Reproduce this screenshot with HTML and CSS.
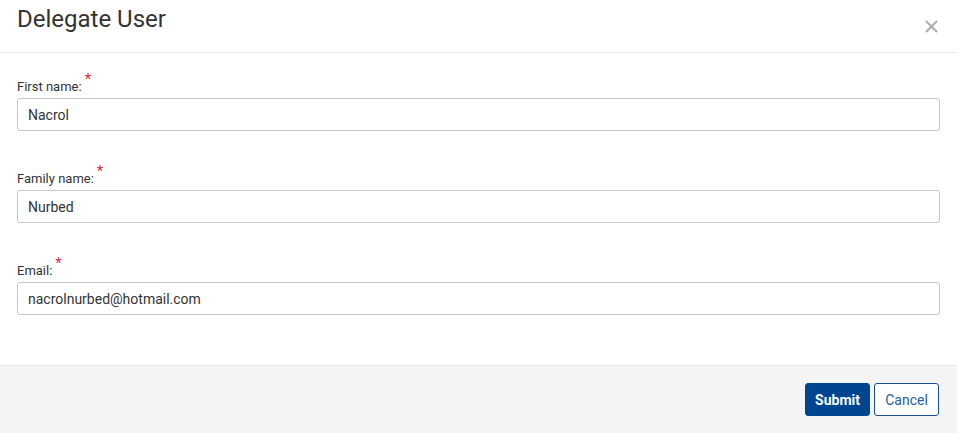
FILE: index.html
```html
<!DOCTYPE html>
<html>
    <head>
        <meta charset="utf-8">
        <title>Delegate User</title>
        <link rel="stylesheet" href="styles.css">
    </head>
    <body>
        <div class="modal">
            <div class="modal-header">
                <h1 class="modal-title">Delegate User</h1>
                <button class="close" type="button">
                    <svg width="13" height="13" viewBox="0 0 13 13">
                        <path d="M1 1L12 12M12 1L1 12" stroke="#acacac" stroke-width="2" fill="none"/>
                    </svg>
                </button>
            </div>
            <div class="modal-body">
                <div class="field">
                    <label for="firstname">First name:<span class="req">*</span></label>
                    <input type="text" id="firstname" value="Nacrol">
                </div>
                <div class="field">
                    <label for="familyname">Family name:<span class="req">*</span></label>
                    <input type="text" id="familyname" value="Nurbed">
                </div>
                <div class="field">
                    <label for="email">Email:<span class="req">*</span></label>
                    <input type="text" id="email" value="nacrolnurbed@hotmail.com">
                </div>
            </div>
            <div class="modal-footer">
                <button class="btn btn-primary" type="button">Submit</button>
                <button class="btn btn-default" type="button">Cancel</button>
            </div>
        </div>
    </body>
</html>
```

FILE: styles.css
```css
body{
    margin: 0;
    font-family: Roboto, "Liberation Sans", sans-serif;
    color: #333;
    background: #fff;
}
.modal{
    width: 957px;
    height: 433px;
    display: flex;
    flex-direction: column;
}
.modal-header{
    box-sizing: border-box;
    height: 53px;
    padding: 5px 19px 0 17px;
    border-bottom: 1px solid #e9e9e9;
    display: flex;
    justify-content: space-between;
    align-items: flex-start;
}
.modal-title{
    margin: 0;
    font-size: 24px;
    line-height: 28px;
    font-weight: 400;
    color: #333;
}
.close{
    margin-top: 15px;
    padding: 0;
    border: 0;
    background: none;
    width: 13px;
    height: 13px;
    cursor: pointer;
}
.close svg{
    display: block;
}
.modal-body{
    padding: 25px 17px 11px 17px;
}
.field{
    margin-bottom: 39px;
}
.field label{
    display: block;
    font-size: 13px;
    line-height: 17px;
    height: 17px;
    margin-bottom: 3px;
    color: #333;
}
.req{
    color: #e2293f;
    font-size: 15px;
    line-height: 14px;
    vertical-align: top;
    position: relative;
    top: -6px;
    margin-left: 3px;
}
.field input{
    box-sizing: border-box;
    display: block;
    width: 100%;
    height: 33px;
    padding: 0 10px;
    border: 1px solid #c6c6c6;
    border-radius: 3px;
    font-family: Roboto, "Liberation Sans", sans-serif;
    font-size: 14px;
    color: #333;
    outline: none;
}
.modal-footer{
    flex: 1;
    background: #f4f4f4;
    border-top: 1px solid #e6e6e6;
    padding: 17px 18px 0 0;
    display: flex;
    justify-content: flex-end;
    align-items: flex-start;
    gap: 4px;
}
.btn{
    box-sizing: border-box;
    width: 65px;
    height: 33px;
    border-radius: 3px;
    font-family: Roboto, "Liberation Sans", sans-serif;
    font-size: 14px;
    padding: 0;
    cursor: pointer;
}
.btn-primary{
    background: #00458f;
    border: 1px solid #00458f;
    color: #fff;
    font-weight: 700;
}
.btn-default{
    background: #fff;
    border: 1px solid #1a4f95;
    color: #2c5c9e;
}
```
